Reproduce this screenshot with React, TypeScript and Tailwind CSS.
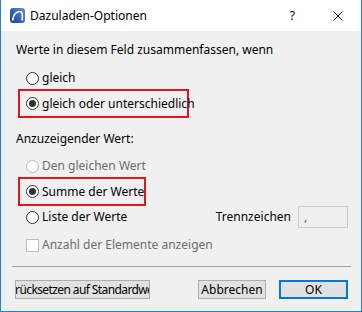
import React from "react";

function RadioDot({ checked, disabled }: { checked?: boolean; disabled?: boolean }) {
  return (
    <span
      className={
        "w-[13px] h-[13px] rounded-full border flex items-center justify-center shrink-0 " +
        (disabled ? "border-[#bcbcbc] bg-white" : "border-[#333333] bg-white")
      }
    >
      {checked ? <span className="w-[7px] h-[7px] rounded-full bg-[#333333]" /> : null}
    </span>
  );
}

function Radio({
  label,
  checked,
  disabled,
  className,
}: {
  label: string;
  checked?: boolean;
  disabled?: boolean;
  className?: string;
}) {
  return (
    <div className={"h-[18px] flex items-center whitespace-nowrap " + (className ?? "")}>
      <RadioDot checked={checked} disabled={disabled} />
      <span className={"ml-[3px] " + (disabled ? "text-[#6d6d6d]" : "text-black")}>{label}</span>
    </div>
  );
}

export default function App() {
  return (
    <div className="w-[362px] h-[312px] border-x border-b border-[#1883d7] bg-[#f0f0f0] flex flex-col font-['Noto_Sans',sans-serif] text-[12px] text-black leading-none overflow-hidden whitespace-nowrap">
      {/* Title bar */}
      <div className="h-[31px] bg-white flex items-center shrink-0">
        <svg width="15" height="15" viewBox="0 0 15 15" className="ml-[9px] shrink-0">
          <defs>
            <linearGradient id="g" x1="0" y1="1" x2="1" y2="0">
              <stop offset="0" stopColor="#1c3f9c" />
              <stop offset="1" stopColor="#5a8ee0" />
            </linearGradient>
          </defs>
          <rect x="0" y="0" width="15" height="15" rx="3" fill="url(#g)" />
          <path d="M2.5 12.5 C3.5 6.5 6.5 3.5 10 3.5 C11.8 3.5 12.3 5 12.3 7 L12.3 12.5" fill="none" stroke="white" strokeWidth="1.6" />
        </svg>
        <span className="ml-[5px]">Dazuladen-Optionen</span>
        <span className="ml-auto">?</span>
        <svg width="10" height="10" viewBox="0 0 10 10" className="ml-[38px] mr-[18px]">
          <path d="M0.5 0.5 L9.5 9.5 M9.5 0.5 L0.5 9.5" stroke="#111" strokeWidth="1" />
        </svg>
      </div>

      {/* Body */}
      <div className="flex flex-col pl-[15px] pt-[10px]">
        <div className="h-[18px] flex items-center">Werte in diesem Feld zusammenfassen, wenn</div>
        <div className="pl-[10px] mt-[10px]">
          <Radio label="gleich" />
        </div>
        <div className="ml-[2px] mt-[2px] w-[171px] h-[29px] border-2 border-[#e3161e] flex items-center pl-[6px]">
          <Radio label="gleich oder unterschiedlich" checked />
        </div>
        <div className="h-[18px] flex items-center mt-[12px]">Anzuzeigender Wert:</div>
        <div className="pl-[10px] mt-[9px]">
          <Radio label="Den gleichen Wert" disabled />
        </div>
        <div className="ml-[2px] mt-[2px] w-[128px] h-[29px] border-2 border-[#e3161e] flex items-center pl-[6px]">
          <Radio label="Summe der Werte" checked />
        </div>
        <div className="h-[22px] flex items-center pl-[10px] pr-[13px]">
          <Radio label="Liste der Werte" />
          <span className="ml-auto">Trennzeichen</span>
          <div className="ml-[7px] w-[50px] h-[22px] border border-[#cccccc] bg-[#f0f0f0] flex items-center pl-[5px] text-[#6d6d6d]">
            ,
          </div>
        </div>
        <div className="h-[18px] flex items-center pl-[10px] mt-[8px]">
          <span className="w-[13px] h-[13px] border border-[#bcbcbc] bg-white shrink-0" />
          <span className="ml-[3px] text-[#6d6d6d]">Anzahl der Elemente anzeigen</span>
        </div>
      </div>

      <div className="ml-[11px] w-[339px] h-px bg-[#a0a0a0] mt-[12px]" />

      <div className="flex mt-[13px] h-[19px]">
        <div className="ml-[14px] w-[135px] h-[19px] border border-[#adadad] bg-[#e1e1e1] flex items-center justify-start overflow-hidden">
          <span className="shrink-0 ml-[-14px] tracking-[-0.6px]">Zurücksetzen auf Standardwerte</span>
        </div>
        <div className="ml-auto w-[68px] h-[19px] border border-[#adadad] bg-[#e1e1e1] flex items-center justify-center">
          Abbrechen
        </div>
        <div className="ml-[13px] mr-[13px] w-[69px] h-[19px] border-2 border-[#0078d7] bg-[#e1e1e1] flex items-center justify-center">
          OK
        </div>
      </div>
    </div>
  );
}
